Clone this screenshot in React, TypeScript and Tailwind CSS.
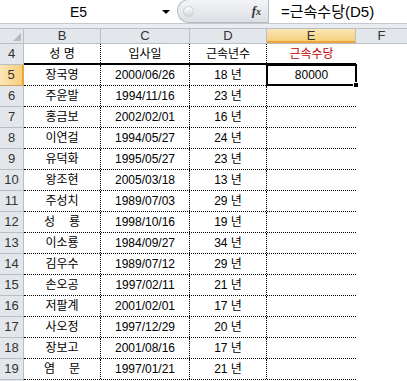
const rows = [
  ["5", "장국영", "2000/06/26", "18"],
  ["6", "주윤발", "1994/11/16", "23"],
  ["7", "홍금보", "2002/02/01", "16"],
  ["8", "이연걸", "1994/05/27", "24"],
  ["9", "유덕화", "1995/05/27", "23"],
  ["10", "왕조현", "2005/03/18", "13"],
  ["11", "주성치", "1989/07/03", "29"],
  ["12", "성룡", "1998/10/16", "19"],
  ["13", "이소룡", "1984/09/27", "34"],
  ["14", "김우수", "1989/07/12", "29"],
  ["15", "손오공", "1997/02/11", "21"],
  ["16", "저팔계", "2001/02/01", "17"],
  ["17", "사오정", "1997/12/29", "20"],
  ["18", "장보고", "2001/08/16", "17"],
  ["19", "염문", "1997/01/21", "21"],
];

function Name({ name }: { name: string }) {
  // two-letter names are spread over three letters' width, like Excel's distributed align
  if (name.length === 2) {
    return (
      <span className="flex w-[36px] justify-between">
        <span>{name[0]}</span>
        <span>{name[1]}</span>
      </span>
    );
  }
  return <span>{name}</span>;
}

export default function App() {
  return (
    <div className="w-[407px] h-[381px] overflow-hidden bg-white font-['Liberation_Sans','Noto_Sans_CJK_KR',sans-serif] text-[12px] text-black">
      {/* formula bar */}
      <div className="flex h-[24px] border-b border-[#c3c8cf] bg-white">
        <div className="flex w-[177px] items-center">
          <div className="w-[157px] text-center text-[14px] leading-none">E5</div>
          <div className="w-0 h-0 border-l-[4px] border-r-[4px] border-t-[4px] border-l-transparent border-r-transparent border-t-black ml-[5px]" />
        </div>
        <div className="flex w-[91px] items-center rounded-l-full border border-r-0 border-[#b7bcc3] bg-gradient-to-b from-[#f3f4f6] to-[#dcdfe3] -mt-[1px]">
          <div className="ml-[5px] h-[11px] w-[11px] rounded-full bg-gradient-to-b from-[#ffffff] to-[#d3d6da] border border-[#c9cdd2]" />
          <span className="ml-auto mr-[7px] font-['Liberation_Serif',serif] italic font-bold text-[13px] text-[#333]">
            f<span className="text-[10px]">x</span>
          </span>
        </div>
        <div className="flex flex-1 items-center border-l border-[#b7bcc3] pl-[12px] text-[15px] leading-none">
          =근속수당(D5)
        </div>
      </div>
      <div className="h-[4px] bg-[#e9ecf0]" />

      {/* column headers */}
      <div className="flex h-[16px] border-y border-[#b9bec5] bg-[#e3e7ec] text-[13px] leading-[14px] text-[#333]">
        <div className="flex w-[24px] items-end justify-end border-r border-[#b9bec5] pr-[2px] pb-[2px]">
          <svg width="8" height="8" viewBox="0 0 8 8">
            <path d="M8 0 L8 8 L0 8 Z" fill="#b5bac1" />
          </svg>
        </div>
        <div className="w-[77px] border-r border-[#b9bec5] text-center">B</div>
        <div className="w-[89px] border-r border-[#b9bec5] text-center">C</div>
        <div className="w-[77px] border-r border-[#b9bec5] text-center">D</div>
        <div className="w-[89px] border-r border-[#b9bec5] border-b-2 border-b-[#f0a23b] bg-gradient-to-b from-[#fbe6b4] to-[#f6cf7b] text-center">E</div>
        <div className="flex-1 text-center">F</div>
      </div>

      {/* row 4: titles */}
      <div className="flex h-[21px]">
        <div className="flex w-[24px] items-center justify-center border-r border-b border-[#b9bec5] bg-[#e3e7ec] text-[13px] text-[#333]">4</div>
        <div className="flex w-[332px] border-b-2 border-black">
          <div className="flex w-[77px] items-center justify-center border-r border-dotted border-black">성 명</div>
          <div className="flex w-[89px] items-center justify-center border-r border-dotted border-black">입사일</div>
          <div className="flex w-[77px] items-center justify-center border-r border-dotted border-black">근속년수</div>
          <div className="flex w-[89px] items-center justify-center text-[#c00000]">근속수당</div>
        </div>
      </div>

      {/* data rows */}
      {rows.map(([n, name, date, years]) => {
        const sel = n === "5";
        return (
          <div key={n} className="flex h-[21px]">
            <div
              className={
                sel
                  ? "flex w-[24px] items-center justify-center border-r-2 border-b border-r-[#f0a23b] border-b-[#c9a464] bg-gradient-to-r from-[#fbe6b4] to-[#f6cf7b] text-[13px] text-[#333]"
                  : "flex w-[24px] items-center justify-center border-r border-b border-[#b9bec5] bg-[#e3e7ec] text-[13px] text-[#333]"
              }
            >
              {n}
            </div>
            <div className="flex w-[332px] border-b border-dotted border-black">
              <div className="flex w-[77px] items-center justify-center border-r border-dotted border-black">
                <Name name={name} />
              </div>
              <div className="flex w-[89px] items-center justify-center border-r border-dotted border-black">{date}</div>
              <div className="flex w-[77px] items-center justify-center border-r border-dotted border-black">{years} 년</div>
              <div className="relative flex w-[89px] items-center justify-center">
                {sel && (
                  <>
                    <span>80000</span>
                    <div className="absolute -left-[1px] -top-[1px] -right-[1px] -bottom-[1px] border-2 border-black" />
                    <div className="absolute -right-[3px] -bottom-[3px] h-[6px] w-[6px] border border-white bg-black" />
                  </>
                )}
              </div>
            </div>
          </div>
        );
      })}
      <div className="flex h-[21px]">
        <div className="w-[24px] border-r border-[#b9bec5] bg-[#e3e7ec]" />
      </div>
    </div>
  );
}
